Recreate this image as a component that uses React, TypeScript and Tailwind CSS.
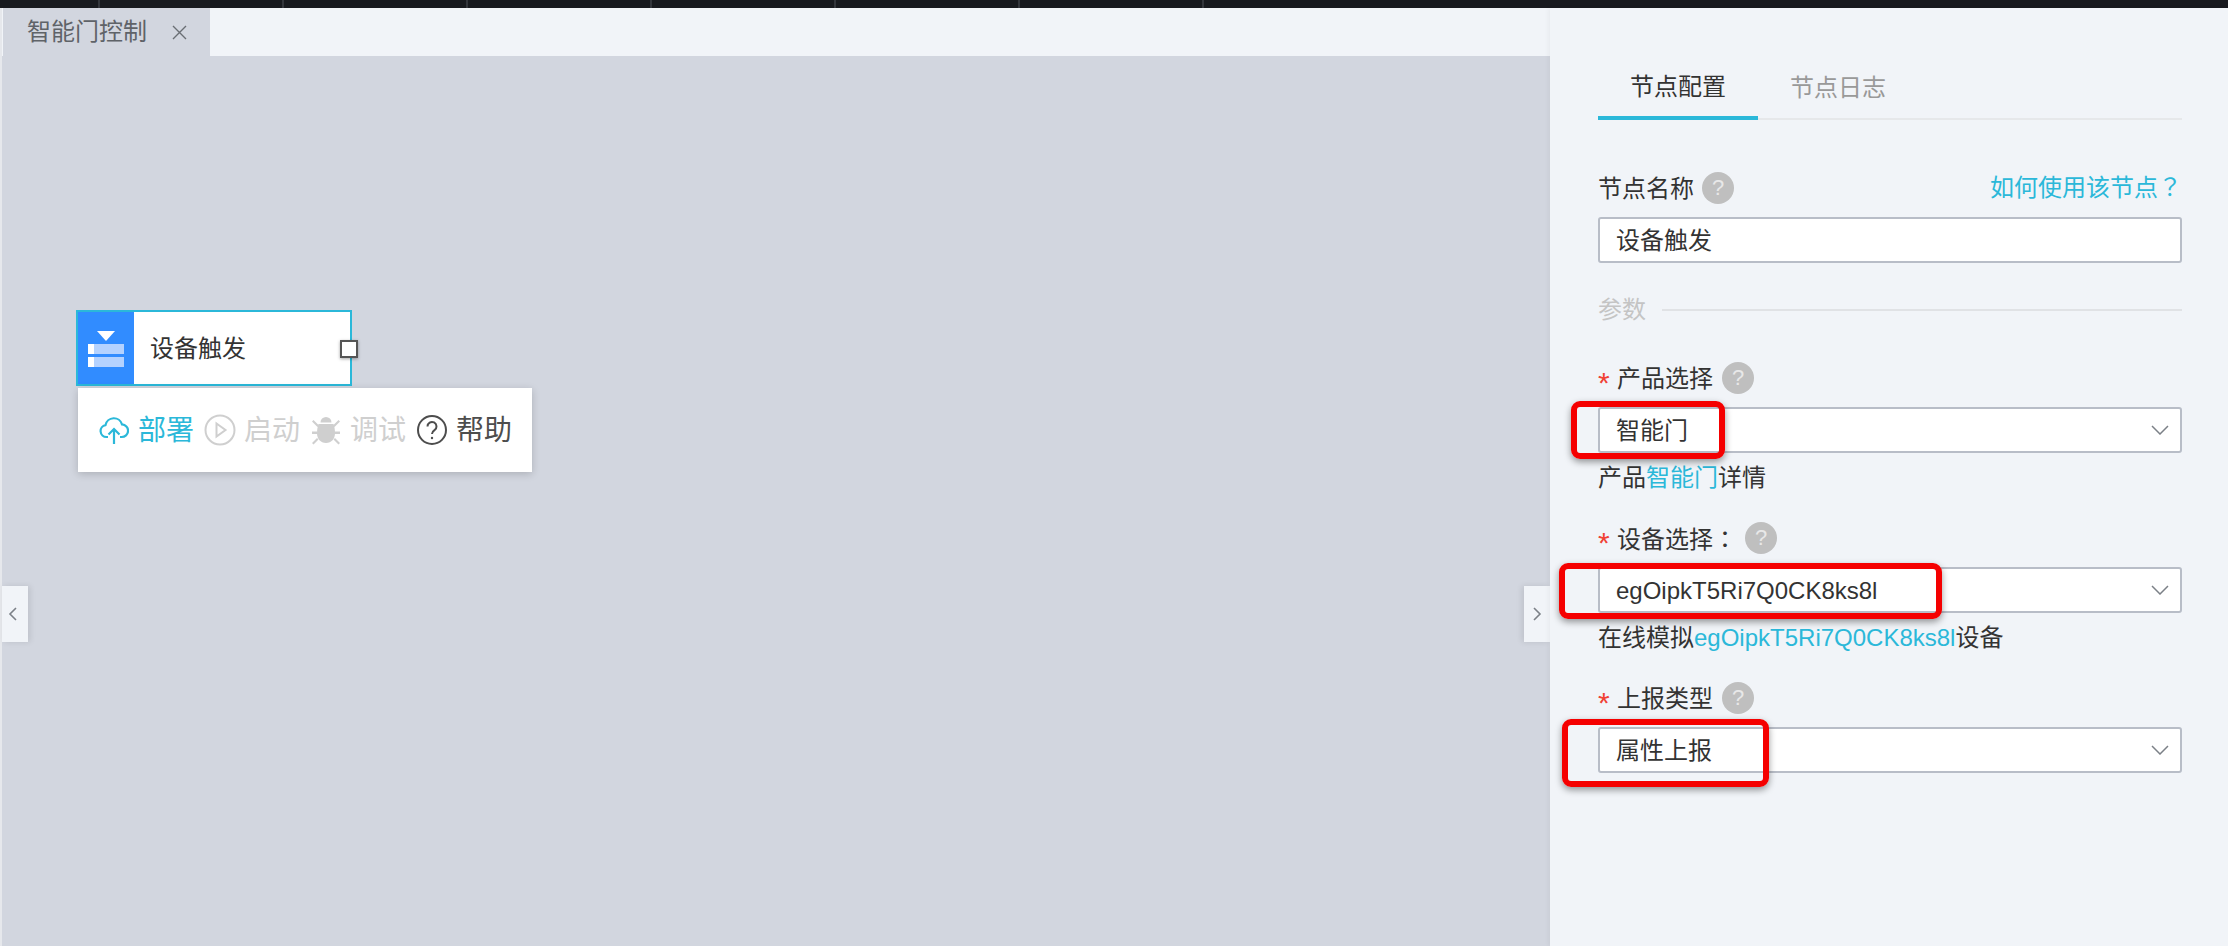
import React from "react";

const cjk = "font-['Liberation_Sans','Noto_Sans_CJK_SC',sans-serif]";
const cjkCentered = "font-['Noto_Sans_CJK_TC',sans-serif]";

const HelpDot = ({ className = "" }: { className?: string }) => (
  <span
    className={`flex h-8 w-8 shrink-0 items-center justify-center rounded-full bg-[#bfbfbf] text-[22px] leading-none text-[#e8e8e8] ${className}`}
  >
    ?
  </span>
);

const Chevron = () => (
  <svg width="18" height="10" viewBox="0 0 18 10" fill="none" stroke="#7b8087" strokeWidth="1.5">
    <path d="M1 1l8 8 8-8" />
  </svg>
);

const Select = ({ value }: { value: string }) => (
  <div className="flex h-[46px] items-center justify-between rounded-[3px] border-2 border-[#b8bdc7] bg-white pl-4 pr-[11px] text-[24px] text-[#333]">
    <span className="pt-[1px]">{value}</span>
    <Chevron />
  </div>
);

const FieldLabel = ({ children, helpGap = "ml-[9px]" }: { children: React.ReactNode; helpGap?: string }) => (
  <div className="flex h-8 items-center text-[24px] text-[#333]">
    <span className="mr-[6px] w-[13px] pt-[10px] text-[30px] leading-none text-[#f04134]">*</span>
    <span className="pt-[2px]">{children}</span>
    <HelpDot className={helpGap} />
  </div>
);

const Toolbar = () => (
  <div className="absolute left-[76px] top-[332px] flex h-[84px] w-[454px] items-center bg-white pl-[21px] text-[28px] shadow-[0_2px_8px_rgba(0,0,0,0.18)]">
    <svg width="30" height="30" viewBox="0 0 30 30" fill="none" stroke="#2bb8d9" strokeWidth="2.2">
      <path d="M9 22H7.500a6 6 0 0 1-1-11.900A8.500 8.500 0 0 1 23 9.400a6.300 6.300 0 0 1-.5 12.600H21" />
      <path d="M15 29V14M9.500 19.500L15 14l5.500 5.500" />
    </svg>
    <span className="ml-[9px] pt-[2px] text-[#2bb8d9]">部署</span>
    <svg className="ml-[10px]" width="32" height="32" viewBox="0 0 32 32" fill="none" stroke="#cfcfcf" strokeWidth="2">
      <circle cx="16" cy="16" r="14.500" />
      <path d="M12.500 9.500L21.500 16l-9 6.500z" />
    </svg>
    <span className="ml-2 pt-[2px] text-[#cfcfcf]">启动</span>
    <svg className="ml-3" width="28" height="30" viewBox="0 0 28 30" fill="#cfcfcf">
      <path d="M8.500 7.500a5.500 5.500 0 0 1 11 0z" />
      <path d="M6.500 9h15c1 2.500 1.500 6 1.500 9.500 0 5-3.500 9.500-9 9.500s-9-4.500-9-9.500C5 15 5.500 11.500 6.500 9z" />
      <path d="M1.500 5l5.500 5.500-1.500 1.500L0 6.500zM26.500 5L21 10.500l1.500 1.500L28 6.500zM0 16.500h5v2.500H0zM23 16.500h5V19h-5zM5 23l1.500 1.500L1.500 29.500 0 28zM23 23l-1.500 1.500 5 5L28 28z" />
    </svg>
    <span className="ml-[10px] pt-[2px] text-[#cfcfcf]">调试</span>
    <svg className="ml-[11px]" width="30" height="30" viewBox="0 0 30 30" fill="none" stroke="#4d4d4d" strokeWidth="2">
      <circle cx="15" cy="15" r="14" />
      <path d="M10.500 11.500a4.500 4.500 0 1 1 7 3.700c-1.500 1-2.500 1.800-2.500 3.800" />
      <circle cx="15" cy="23" r="1.200" fill="#4d4d4d" stroke="none" />
    </svg>
    <span className="ml-[9px] pt-[2px] text-[#4d4d4d]">帮助</span>
  </div>
);

const FlowNode = () => (
  <div className="absolute left-[74px] top-[254px] flex h-[76px] w-[276px] border-2 border-[#2bb8d9] bg-white">
    <div className="flex w-[56px] shrink-0 flex-col items-center justify-center bg-[#318cff] pt-[1px]">
      <svg width="36" height="36" viewBox="0 0 36 36">
        <path d="M9 0h18l-9 10z" fill="#fff" />
        <rect x="0" y="13" width="36" height="10" fill="#b4d2ff" />
        <rect x="0" y="26" width="36" height="10" fill="#b4d2ff" />
        <rect x="0" y="13" width="6" height="10" fill="#fff" />
        <rect x="0" y="26" width="6" height="10" fill="#fff" />
      </svg>
    </div>
    <div className="flex items-center pl-4 pt-[1px] text-[24px] text-[#333]">设备触发</div>
    <span className="absolute left-[262px] top-[28px] h-[18px] w-[18px] border-2 border-[#555] bg-white shadow-[0_1px_3px_rgba(0,0,0,0.35)]" />
  </div>
);

const RedBox = ({ className }: { className: string }) => (
  <div
    className={`pointer-events-none absolute z-20 rounded-[9px] border-[6px] border-[#f50000] shadow-[0_3px_7px_rgba(0,0,0,0.4)] ${className}`}
  />
);

export default function App() {
  return (
    <div className={`relative flex h-[946px] w-[2228px] flex-col overflow-hidden bg-[#f1f4f8] ${cjk}`}>
      {/* top bar */}
      <div className="flex h-2 shrink-0 bg-[#181a1f]">
        <div className="w-[100px] border-r-2 border-[#33363c]" />
        {[0, 1, 2, 3, 4, 5].map((i) => (
          <div key={i} className="w-[184px] border-r-2 border-[#33363c]" />
        ))}
      </div>

      <div className="flex min-h-0 flex-1">
        {/* left side */}
        <div className="flex w-[1550px] shrink-0 flex-col border-l-2 border-[#e6e8ec]">
          <div className="flex h-12 shrink-0 bg-[#f1f4f8]">
            <div className="ml-px flex w-[207px] items-center bg-[#d2d6df] pl-6 text-[24px] text-[#5f6368]">
              <span>智能门控制</span>
              <svg className="ml-[25px]" width="15" height="15" viewBox="0 0 15 15" stroke="#6a6e74" strokeWidth="1.4">
                <path d="M1 1l13 13M14 1L1 14" />
              </svg>
            </div>
          </div>
          <div className="relative flex-1 bg-[#d2d6df]">
            <FlowNode />
            <Toolbar />
          </div>
        </div>

        {/* right panel */}
        <div className="z-10 flex-1 bg-[#f1f4f8] pl-12 pr-[46px] shadow-[-2px_0_4px_rgba(0,0,0,0.04)]">
          <div className="mt-[48px] flex h-[64px] border-b-2 border-[#e6e8ea]">
            <div className="-mb-[2px] flex w-40 items-center justify-center border-b-4 border-[#2bb8d9] pt-[1px] text-[24px] text-[#333]">
              节点配置
            </div>
            <div className="flex w-[160px] items-center justify-center pt-[1px] text-[24px] text-[#999]">节点日志</div>
          </div>

          <div className="mt-[52px] flex h-8 items-center text-[24px] text-[#333]">
            <span className="pt-[2px]">节点名称</span>
            <HelpDot className="ml-2" />
            <span className="ml-auto pb-[3px] text-[#2bb8d9]">
              如何使用该节点<span className={cjkCentered}>？</span>
            </span>
          </div>
          <div className="mt-[13px] flex h-[46px] items-center rounded-[3px] border-2 border-[#b8bdc7] bg-white pl-4 pt-[1px] text-[24px] text-[#333]">
            设备触发
          </div>

          <div className="mt-[30px] flex h-[34px] items-center gap-4 text-[24px] text-[#c4c4c4]">
            <span>参数</span>
            <span className="h-[2px] flex-1 bg-[#e0e2e5]" />
          </div>

          <div className="mt-[35px]">
            <FieldLabel>产品选择</FieldLabel>
            <div className="mt-[13px]">
              <Select value="智能门" />
            </div>
            <div className="mt-[8px] text-[24px] leading-[33px] text-[#333]">
              产品<span className="text-[#2bb8d9]">智能门</span>详情
            </div>
          </div>

          <div className="mt-[28px]">
            <FieldLabel helpGap="ml-2">
              设备选择<span className={cjkCentered}>：</span>
            </FieldLabel>
            <div className="mt-[13px]">
              <Select value="egOipkT5Ri7Q0CK8ks8l" />
            </div>
            <div className="mt-[8px] text-[24px] leading-[33px] text-[#333]">
              在线模拟<span className="text-[#2bb8d9]">egOipkT5Ri7Q0CK8ks8l</span>设备
            </div>
          </div>

          <div className="mt-[28px]">
            <FieldLabel>上报类型</FieldLabel>
            <div className="mt-[13px]">
              <Select value="属性上报" />
            </div>
          </div>
        </div>
      </div>

      {/* collapse handles */}
      <div className="absolute left-[2px] top-[586px] flex h-14 w-[26px] items-center justify-center bg-[#f1f4f8] pr-[6px] shadow-[2px_0_6px_rgba(0,0,0,0.1)]">
        <svg width="9" height="14" viewBox="0 0 9 14" fill="none" stroke="#7b8087" strokeWidth="1.6">
          <path d="M8 1L2 7l6 6" />
        </svg>
      </div>
      <div className="absolute left-[1524px] top-[586px] flex h-14 w-[26px] items-center justify-center bg-[#f1f4f8] shadow-[-2px_0_6px_rgba(0,0,0,0.1)]">
        <svg width="9" height="14" viewBox="0 0 9 14" fill="none" stroke="#7b8087" strokeWidth="1.6">
          <path d="M1 1l6 6-6 6" />
        </svg>
      </div>

      {/* annotations */}
      <RedBox className="left-[1571px] top-[401px] h-[58px] w-[154px]" />
      <RedBox className="left-[1559px] top-[563px] h-[56px] w-[383px]" />
      <RedBox className="left-[1562px] top-[719px] h-[68px] w-[207px]" />
    </div>
  );
}
